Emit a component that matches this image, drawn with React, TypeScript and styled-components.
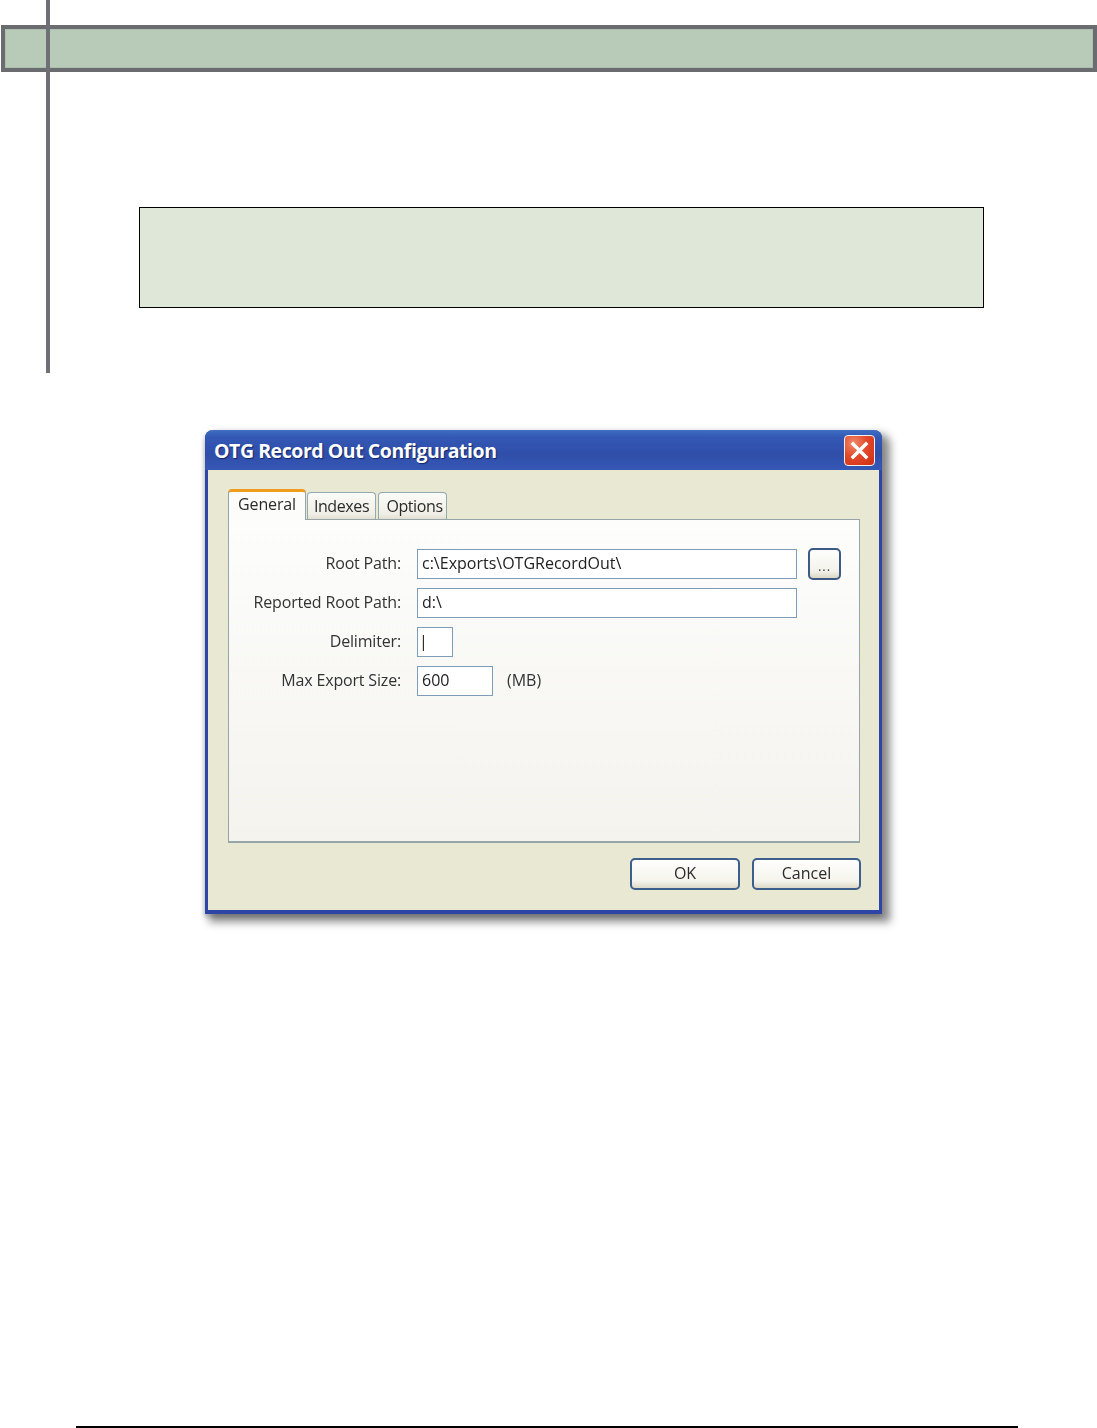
import React from "react";
import styled, { createGlobalStyle } from "styled-components";

const Global = createGlobalStyle`
  html, body { margin: 0; padding: 0; background: #fff; }
  * { box-sizing: border-box; }
`;

const UI = `"Open Sans", "Liberation Sans", sans-serif`;

const Page = styled.div`
  width: 1097px;
  height: 1428px;
  overflow: hidden;
  background: #fff;
  padding-top: 25px;
`;
const Header = styled.header`
  position: relative;
  height: 348px;
`;
const SpineRule = styled.div`
  position: absolute;
  left: 46px;
  top: -25px;
  width: 4px;
  height: 373px;
  background: #6f7075;
`;
const Banner = styled.div`
  margin-left: 1px;
  width: 1096px;
  height: 47px;
  border: 4px solid #6b6c70;
  background: #b8cbb8;
  box-shadow: inset 0 0 0 1px #aebdb0;
`;
const Note = styled.div`
  margin: 135px 0 0 139px;
  width: 845px;
  height: 101px;
  border: 1px solid #000;
  background: #dfe7d9;
`;
const Dialog = styled.section`
  margin: 57px 0 0 205px;
  width: 677px;
  height: 484px;
  display: flex;
  flex-direction: column;
  border: solid #2c45a6;
  border-width: 0 3px 4px 3px;
  border-radius: 8px 8px 0 0;
  box-shadow: 6px 6px 8px 2px rgba(40, 40, 40, 0.55), -1px 3px 4px rgba(0, 0, 0, 0.2);
  background: #e9e8d3;
  filter: blur(0.4px);
`;
const TitleBar = styled.div`
  height: 40px;
  margin: 0 -3px;
  padding: 0 7px 0 9px;
  display: flex;
  align-items: center;
  justify-content: space-between;
  border-radius: 8px 8px 0 0;
  background: linear-gradient(#3f6fc4 0, #3358b4 18%, #2f4eaa 60%, #3558b4 100%);
`;
const Title = styled.h1`
  margin: 1px 0 0;
  font: bold 19.5px ${UI};
  letter-spacing: -0.45px;
  color: #fff;
  text-shadow: 1px 1px 1px rgba(10, 25, 90, 0.8);
`;
const CloseButton = styled.div`
  width: 31px;
  height: 31px;
  margin-top: 1px;
  display: flex;
  align-items: center;
  justify-content: center;
  border: 1.5px solid #f2f2f2;
  border-radius: 4px;
  background: radial-gradient(circle at 30% 25%, #ef8b6c 0, #e2492a 45%, #cf2d12 100%);
`;
const Body = styled.div`
  flex: 1;
  display: flex;
  flex-direction: column;
  padding: 19px 18px 20px 20px;
`;
const TabStrip = styled.div`
  position: relative;
  z-index: 1;
  height: 31px;
  margin-bottom: -1px;
  display: flex;
  align-items: flex-start;
`;
const ActiveTab = styled.div`
  width: 78px;
  height: 31px;
  margin-right: 1px;
  padding-top: 1px;
  text-align: center;
  font: 16px ${UI};
  letter-spacing: -0.15px;
  color: #2b2b2b;
  background: #fcfcfb;
  border: 1px solid #93a4a8;
  border-bottom: 0;
  border-top: 3px solid #ee9e1c;
  border-radius: 4px 4px 0 0;
`;
const Tab = styled.div<{ $width: number; $gap: number; $indent: number }>`
  width: ${(p) => p.$width}px;
  height: 27px;
  margin: 3px ${(p) => p.$gap}px 0 0;
  padding: 2px 0 0 ${(p) => p.$indent}px;
  text-align: center;
  font: 16px ${UI};
  letter-spacing: -0.4px;
  color: #2b2b2b;
  background: linear-gradient(#fbfbf8, #f0efe6 80%, #e2e0d2);
  border: 1px solid #93a9b0;
  border-bottom: 0;
  border-radius: 4px 4px 0 0;
`;
const Panel = styled.div`
  width: 632px;
  height: 324px;
  padding: 29px 0 0;
  display: flex;
  flex-direction: column;
  gap: 9px;
  border: 1px solid #97a5a8;
  border-bottom-width: 2px;
  background: linear-gradient(#fdfdfc, #f4f3ee);
`;
const FormRow = styled.div`
  height: 30px;
  display: flex;
  align-items: center;
`;
const Label = styled.div`
  width: 172px;
  margin: -2px 16px 0 0;
  text-align: right;
  font: 16px ${UI};
  letter-spacing: -0.17px;
  color: #333;
  white-space: nowrap;
`;
const Field = styled.div<{ $width: number; $indent?: number }>`
  width: ${(p) => p.$width}px;
  height: 30px;
  padding-left: ${(p) => p.$indent ?? 4}px;
  font: 16px/26px ${UI};
  color: #222;
  background: #fff;
  border: 1.5px solid #7f9db9;
  white-space: nowrap;
`;
const Unit = styled.div`
  margin: -2px 0 0 14px;
  font: 16px ${UI};
  color: #333;
`;
const Browse = styled.div`
  width: 33px;
  height: 32px;
  margin-left: 11px;
  text-align: center;
  font: 13px/32px ${UI};
  letter-spacing: 1px;
  color: #444;
  border: 2px solid #3d5a85;
  border-radius: 5px;
  background: linear-gradient(#fefefd, #f3f2ea 75%, #dcd8c6);
`;
const Actions = styled.div`
  margin-top: 15px;
  display: flex;
  justify-content: flex-end;
  gap: 12px;
`;
const ActionButton = styled.div<{ $width: number }>`
  width: ${(p) => p.$width}px;
  height: 32px;
  text-align: center;
  font: 16px/27px ${UI};
  color: #2b2b2b;
  border: 2px solid #3d5f8c;
  border-radius: 5px;
  background: linear-gradient(#fefefd, #f5f4ec 75%, #dedac8);
`;
const FooterRule = styled.div`
  margin: 512px 0 0 76px;
  width: 942px;
  height: 2px;
  background: #000;
`;

export default function App() {
  return (
    <Page>
      <Global />
      <Header>
        <Banner />
        <SpineRule />
        <Note />
      </Header>
      <Dialog>
        <TitleBar>
          <Title>OTG Record Out Configuration</Title>
          <CloseButton>
            <svg width="19" height="19" viewBox="0 0 19 19">
              <path d="M3 3 L16 16 M16 3 L3 16" stroke="#fff" strokeWidth="3.4" strokeLinecap="square" />
            </svg>
          </CloseButton>
        </TitleBar>
        <Body>
          <TabStrip>
            <ActiveTab>General</ActiveTab>
            <Tab $width={69} $gap={2} $indent={0}>Indexes</Tab>
            <Tab $width={69} $gap={0} $indent={4}>Options</Tab>
          </TabStrip>
          <Panel>
            <FormRow>
              <Label>Root Path:</Label>
              <Field $width={380}>c:\Exports\OTGRecordOut\</Field>
              <Browse>...</Browse>
            </FormRow>
            <FormRow>
              <Label>Reported Root Path:</Label>
              <Field $width={380}>d:\</Field>
            </FormRow>
            <FormRow>
              <Label>Delimiter:</Label>
              <Field $width={36} $indent={1}>|</Field>
            </FormRow>
            <FormRow>
              <Label>Max Export Size:</Label>
              <Field $width={76}>600</Field>
              <Unit>(MB)</Unit>
            </FormRow>
          </Panel>
          <Actions>
            <ActionButton $width={110}>OK</ActionButton>
            <ActionButton $width={109}>Cancel</ActionButton>
          </Actions>
        </Body>
      </Dialog>
      <FooterRule />
    </Page>
  );
}
